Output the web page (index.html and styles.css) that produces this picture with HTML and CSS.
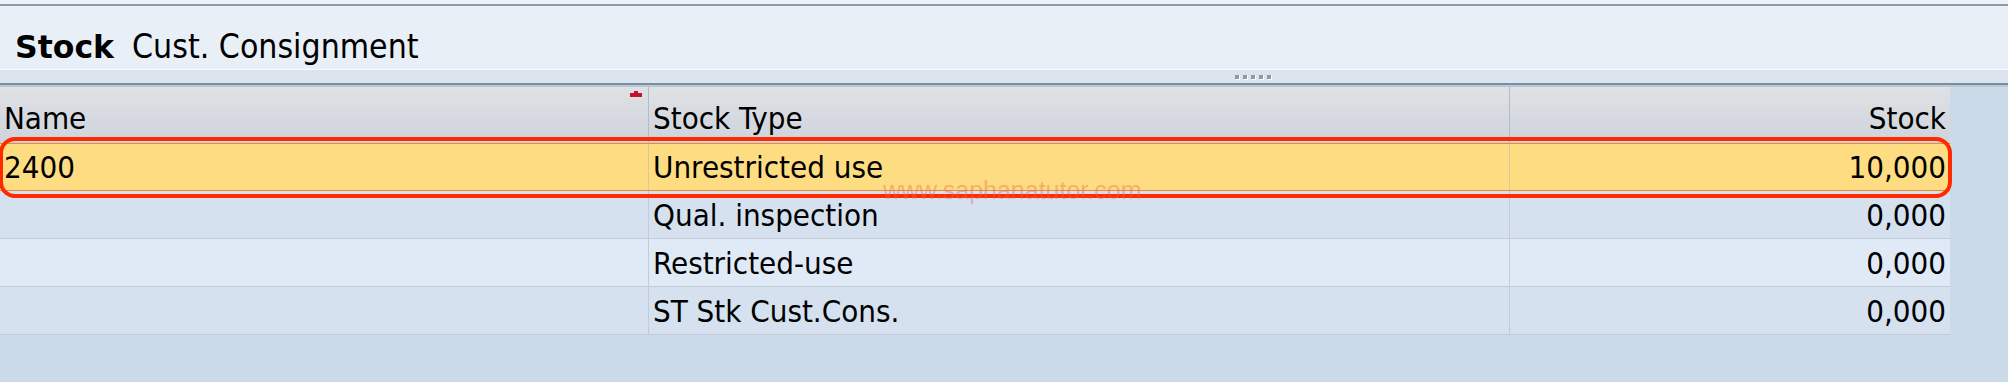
FILE: index.html
```html
<!DOCTYPE html>
<html lang="en">
<head>
<meta charset="utf-8">
<title>Stock Cust. Consignment</title>
<link rel="stylesheet" href="styles.css">
</head>
<body>
  <div class="top-edge"></div>
  <header class="title-bar">
    <span class="title-main">Stock</span>
    <span class="title-sub">Cust. Consignment</span>
  </header>
  <div class="splitter">
    <div class="grip"><i></i><i></i><i></i><i></i><i></i></div>
  </div>
  <div class="splitter-shade"></div>

  <div class="table">
    <div class="row head">
      <div class="cell name-col">Name
        <svg class="sort-mark" width="12" height="6" viewBox="0 0 12 6"><path d="M4 0h4v2h4v4H0V2h4z" fill="#c4122f"/></svg>
      </div>
      <div class="cell">Stock Type</div>
      <div class="cell num">Stock</div>
    </div>
    <div class="row selected">
      <div class="cell">2400</div>
      <div class="cell">Unrestricted use</div>
      <div class="cell num">10,000</div>
    </div>
    <div class="row even">
      <div class="cell"></div>
      <div class="cell">Qual. inspection</div>
      <div class="cell num">0,000</div>
    </div>
    <div class="row odd">
      <div class="cell"></div>
      <div class="cell">Restricted-use</div>
      <div class="cell num">0,000</div>
    </div>
    <div class="row even">
      <div class="cell"></div>
      <div class="cell">ST Stk Cust.Cons.</div>
      <div class="cell num">0,000</div>
    </div>
  </div>

  <div class="highlight-ring"></div>
  <div class="watermark">www.saphanatutor.com</div>
</body>
</html>
```

FILE: styles.css
```css
html, body {
  margin: 0;
  padding: 0;
}

body {
  width: 2008px;
  height: 382px;
  overflow: hidden;
  position: relative;
  background: #cbdae8;
  font-family: "DejaVu Sans Condensed", "DejaVu Sans", sans-serif;
  color: #000;
}

/* thin frame edge above the title */
.top-edge {
  height: 4px;
  background: #eef2f6;
  border-bottom: 2px solid #8a99ab;
}

.title-bar {
  height: 64px;
  box-sizing: border-box;
  padding: 21px 0 0 15px;
  display: flex;
  align-items: baseline;
  gap: 18px;
  font-size: 33.5px;
  line-height: 40px;
  background: #e9eff6;
  border-bottom: 1px solid #f8fafc;
}

.title-main {
  font-weight: bold;
  font-family: "DejaVu Sans", sans-serif;
  font-size: 31.5px;
}

/* resize bar between title and grid */
.splitter {
  height: 13px;
  background: #dce5ed;
  border-bottom: 2px solid #7b8ea0;
  display: flex;
  align-items: center;
}

.grip {
  margin-left: 1235px;
  display: flex;
  gap: 4px;
}

.grip i {
  width: 4px;
  height: 4px;
  background: #8d9aaa;
  box-shadow: 1px 1px 0 #ffffff;
}

.splitter-shade {
  height: 2px;
  background: #b7c8d8;
}

.table {
  width: 1950px;
}

.row {
  display: grid;
  grid-template-columns: 649px 861px 440px;
  height: 48px;
  box-sizing: border-box;
  border-bottom: 1px solid #c1cad5;
}

.cell {
  position: relative;
  box-sizing: border-box;
  padding: 6px 4px 0 4px;
  font-size: 31px;
  line-height: 36px;
  white-space: nowrap;
  border-right: 1px solid #c3ccd6;
}

.cell:last-child {
  border-right: none;
}

.cell.num {
  text-align: right;
  padding-right: 4px;
}

.row.head {
  height: 56px;
  background: linear-gradient(#dfe1e4, #cfd4dc);
  border-bottom: 1px solid #c6d0da;
}

.row.head .cell {
  padding-top: 13px;
  border-right-color: #b3bcc6;
}

.sort-mark {
  position: absolute;
  right: 6px;
  top: 4px;
}

.row.selected {
  background: #fedd82;
  border-top: 1px solid #e38a3c;
  border-bottom: 1px solid #e38a3c;
  height: 48px;
}

.row.selected .cell {
  padding-top: 5px;
  border-right-color: #d9c69a;
}

.row.even {
  background: #d5e1ee;
}

.row.odd {
  background: #dfeaf6;
}

/* red annotation ring around the selected line */
.highlight-ring {
  position: absolute;
  left: -1px;
  top: 137px;
  width: 1953px;
  height: 61px;
  box-sizing: border-box;
  border: 4px solid #ff2a00;
  border-radius: 16px;
}

.watermark {
  position: absolute;
  left: 883px;
  top: 176px;
  font-family: "Liberation Sans", Arial, sans-serif;
  font-size: 25px;
  color: rgba(236, 104, 84, 0.42);
}
```
